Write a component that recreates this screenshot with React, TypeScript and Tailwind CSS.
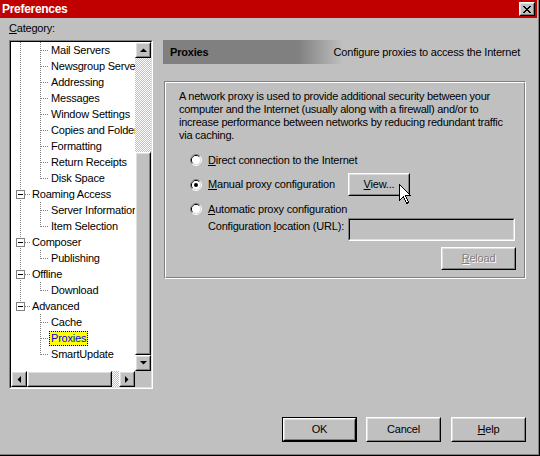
import type { ReactNode } from 'react'

type Row = {
    label: string
    kind: 'root' | 'child'
    last?: boolean
    trunk?: boolean
    selected?: boolean
}

const rows: Row[] = [
    { label: 'Mail Servers', kind: 'child', trunk: true },
    { label: 'Newsgroup Servers', kind: 'child', trunk: true },
    { label: 'Addressing', kind: 'child', trunk: true },
    { label: 'Messages', kind: 'child', trunk: true },
    { label: 'Window Settings', kind: 'child', trunk: true },
    { label: 'Copies and Folders', kind: 'child', trunk: true },
    { label: 'Formatting', kind: 'child', trunk: true },
    { label: 'Return Receipts', kind: 'child', trunk: true },
    { label: 'Disk Space', kind: 'child', trunk: true, last: true },
    { label: 'Roaming Access', kind: 'root' },
    { label: 'Server Information', kind: 'child', trunk: true },
    { label: 'Item Selection', kind: 'child', trunk: true, last: true },
    { label: 'Composer', kind: 'root' },
    { label: 'Publishing', kind: 'child', trunk: true, last: true },
    { label: 'Offline', kind: 'root' },
    { label: 'Download', kind: 'child', trunk: true, last: true },
    { label: 'Advanced', kind: 'root', last: true },
    { label: 'Cache', kind: 'child' },
    { label: 'Proxies', kind: 'child', selected: true },
    { label: 'SmartUpdate', kind: 'child', last: true },
]

const dots = { stroke: '#808080', strokeDasharray: '1 1' }

// dotted tree guides + expand box for one row
const Guide = ({ row }: { row: Row }) => {
    if (row.kind === 'root') {
        return (
            <svg width="19" height="16" className="shrink-0" shapeRendering="crispEdges">
                <line x1="9.5" y1="0" x2="9.5" y2={row.last ? 8 : 16} {...dots} />
                <line x1="14" y1="8.5" x2="19" y2="8.5" {...dots} />
                <rect x="5.5" y="4.5" width="8" height="8" fill="#fff" stroke="#808080" />
                <line x1="7" y1="8.5" x2="12" y2="8.5" stroke="#000" />
            </svg>
        )
    }
    return (
        <svg width="38" height="16" className="shrink-0" shapeRendering="crispEdges">
            {row.trunk && <line x1="9.5" y1="0" x2="9.5" y2="16" {...dots} />}
            <line x1="29.5" y1="0" x2="29.5" y2={row.last ? 9 : 16} {...dots} />
            <line x1="30" y1="8.5" x2="38" y2="8.5" {...dots} />
        </svg>
    )
}

const Raised = ({ className = '', children }: { className?: string, children?: ReactNode }) => (
    <div className={`border border-t-white border-l-white border-r-black border-b-black bg-[#c0c0c0] ${className}`}>
        <div className="h-full w-full border border-t-[#dfdfdf] border-l-[#dfdfdf] border-r-[#808080] border-b-[#808080] flex items-center justify-center">
            {children}
        </div>
    </div>
)

const Sunken = ({ className = '' }: { className?: string }) => (
    <div className={`border border-t-[#808080] border-l-[#808080] border-r-white border-b-white ${className}`}>
        <div className="h-full w-full border border-t-black border-l-black border-r-[#dfdfdf] border-b-[#dfdfdf] bg-[#c0c0c0]" />
    </div>
)

const Radio = ({ checked }: { checked?: boolean }) => (
    <svg width="12" height="12" className="shrink-0">
        <path d="M2.11 9.89 A5.5 5.5 0 0 1 9.89 2.11" fill="none" stroke="#808080" />
        <path d="M9.89 2.11 A5.5 5.5 0 0 1 2.11 9.89" fill="none" stroke="#fff" />
        <path d="M2.82 9.18 A4.5 4.5 0 0 1 9.18 2.82" fill="none" stroke="#000" />
        <path d="M9.18 2.82 A4.5 4.5 0 0 1 2.82 9.18" fill="none" stroke="#dfdfdf" />
        <circle cx="6" cy="6" r="4" fill="#fff" />
        {checked && <circle cx="6" cy="6" r="2" fill="#000" />}
    </svg>
)

const Arrow = ({ dir }: { dir: 'up' | 'down' | 'left' | 'right' }) => {
    const pts = {
        up: '0,4 7,4 3.5,0.5',
        down: '0,0 7,0 3.5,3.5',
        left: '4,0 4,7 0.5,3.5',
        right: '0,0 0,7 3.5,3.5',
    }[dir]
    const vertical = dir === 'up' || dir === 'down'
    return (
        <svg width={vertical ? 7 : 4} height={vertical ? 4 : 7}>
            <polygon points={pts} fill="#000" />
        </svg>
    )
}

const dither = 'bg-[repeating-conic-gradient(#ffffff_0%_25%,#c0c0c0_0%_50%)] bg-[length:2px_2px]'

const Tree = () => (
    <div className="w-[144px] h-[349px] border border-t-[#808080] border-l-[#808080] border-r-white border-b-white">
        <div className="h-full w-full border border-t-black border-l-black border-r-[#dfdfdf] border-b-[#dfdfdf] bg-white grid grid-cols-[124px_16px] grid-rows-[329px_16px]">
            <div className="overflow-hidden">
                {rows.map((r) => (
                    <div key={r.label} className="flex items-center h-4 whitespace-nowrap">
                        <Guide row={r} />
                        <span className={`px-px leading-[13px] border border-dotted ${r.selected ? 'bg-[#ffff00] text-[#0000ff] border-black' : 'border-transparent'}`}>
                            {r.label}
                        </span>
                    </div>
                ))}
            </div>
            {/* vertical scroll bar */}
            <div className="flex flex-col bg-[#c0c0c0]">
                <Raised className="h-4 w-4"><Arrow dir="up" /></Raised>
                <div className={`h-[94px] ${dither}`} />
                <Raised className="h-[203px] w-4" />
                <Raised className="h-4 w-4"><Arrow dir="down" /></Raised>
            </div>
            {/* horizontal scroll bar */}
            <div className="flex bg-[#c0c0c0]">
                <Raised className="h-4 w-4"><Arrow dir="left" /></Raised>
                <Raised className="h-4 w-[85px]" />
                <div className={`h-4 w-[7px] ${dither}`} />
                <Raised className="h-4 w-4"><Arrow dir="right" /></Raised>
            </div>
            <div className="bg-[#c0c0c0]" />
        </div>
    </div>
)

const Button = ({ children, primary, disabled, className = '' }: { children: ReactNode, primary?: boolean, disabled?: boolean, className?: string }) => {
    const label = <span className={disabled ? 'text-[#808080] [text-shadow:1px_1px_0_#ffffff]' : ''}>{children}</span>
    if (primary) {
        return (
            <div className={`border border-black ${className}`}>
                <Raised className="h-full w-full">{label}</Raised>
            </div>
        )
    }
    return <Raised className={className}>{label}</Raised>
}

export default function App() {
    return (
        <div className="relative w-[540px] h-[456px] border-r border-b border-black bg-[#c0c0c0] text-black text-[11px] leading-[13px] tracking-[-0.2px] font-[family-name:'Liberation_Sans',Arial,sans-serif] select-none">
            <div className="h-full border-r border-b border-[#808080] pr-px pb-px flex flex-col">
                <div className="h-[18px] bg-[#c00000] flex items-center justify-between pl-[2px] pr-[2px] shrink-0">
                    <span className="text-white font-bold text-[12px] tracking-[-0.3px]">Preferences</span>
                    <Raised className="w-4 h-[14px]">
                        <svg width="8" height="7" shapeRendering="crispEdges">
                            <path d="M0 0h2v1h-2zM6 0h2v1h-2zM1 1h2v1h-2zM5 1h2v1h-2zM2 2h4v1h-4zM3 3h2v1h-2zM2 4h4v1h-4zM1 5h2v1h-2zM5 5h2v1h-2zM0 6h2v1h-2zM6 6h2v1h-2z" fill="#000" />
                        </svg>
                    </Raised>
                </div>

                <div className="flex flex-1 flex-col">
                    <div className="flex">
                        <div className="pl-[9px] pt-1">
                            <div><u>C</u>ategory:</div>
                            <div className="mt-[5px]">
                                <Tree />
                            </div>
                        </div>

                        <div className="ml-[10px] pt-[22px]">
                            <div className="w-[363px] h-6 flex items-center justify-between pl-[7px] pr-[6px] bg-[linear-gradient(90deg,#808080_0px,#808080_135px,#c0c0c0_180px)]">
                                <span className="font-bold">Proxies</span>
                                <span>Configure proxies to access the Internet</span>
                            </div>

                            <div className="ml-px mt-[17px] w-[362px] h-[198px] border border-t-[#808080] border-l-[#808080] border-r-white border-b-white">
                                <div className="h-full border border-t-white border-l-white border-r-[#808080] border-b-[#808080] flex flex-col">
                                    <p className="pl-[13px] pt-[7px] whitespace-nowrap tracking-[-0.25px]">
                                        A network proxy is used to provide additional security between your<br />
                                        computer and the Internet (usually along with a firewall) and/or to<br />
                                        increase performance between networks by reducing redundant traffic<br />
                                        via caching.
                                    </p>

                                    <div className="mt-[10px] h-4 pl-6 flex items-center gap-[6px]">
                                        <Radio />
                                        <span><u>D</u>irect connection to the Internet</span>
                                    </div>

                                    <div className="mt-[5px] h-[23px] pl-6 flex items-center">
                                        <div className="w-[158px] flex items-center gap-[6px]">
                                            <Radio checked />
                                            <span><u>M</u>anual proxy configuration</span>
                                        </div>
                                        <Button className="w-[62px] h-[23px]"><u>V</u>iew...</Button>
                                    </div>

                                    <div className="mt-[5px] h-4 pl-6 flex items-center gap-[6px]">
                                        <Radio />
                                        <span><u>A</u>utomatic proxy configuration</span>
                                    </div>

                                    <div className="mt-px h-[23px] pl-[42px] flex">
                                        <span className="w-[140px] pt-[2px] whitespace-nowrap">Configuration <u>l</u>ocation (URL):</span>
                                        <Sunken className="w-[167px] h-[23px]" />
                                    </div>

                                    <div className="mt-[6px] pr-[8px] flex justify-end">
                                        <Button disabled className="w-[75px] h-[23px]"><u>R</u>eload</Button>
                                    </div>
                                </div>
                            </div>
                        </div>
                    </div>

                    <div className="mt-auto pb-[11px] pr-[11px] flex justify-end">
                        <Button primary className="w-[75px] h-[25px] mr-[9px]">OK</Button>
                        <Button className="w-[75px] h-[25px] mr-[10px]">Cancel</Button>
                        <Button className="w-[75px] h-[25px]"><u>H</u>elp</Button>
                    </div>
                </div>
            </div>

            {/* mouse pointer resting on the View button */}
            <svg width="13" height="21" className="absolute left-[399px] top-[184px] pointer-events-none" shapeRendering="crispEdges">
                <path d="M0.5 0.5 L0.5 16.5 L4.5 12.5 L7.5 19.5 L9.5 18.5 L6.5 11.5 L11.5 11.5 Z" fill="#fff" stroke="#000" />
            </svg>
        </div>
    )
}
